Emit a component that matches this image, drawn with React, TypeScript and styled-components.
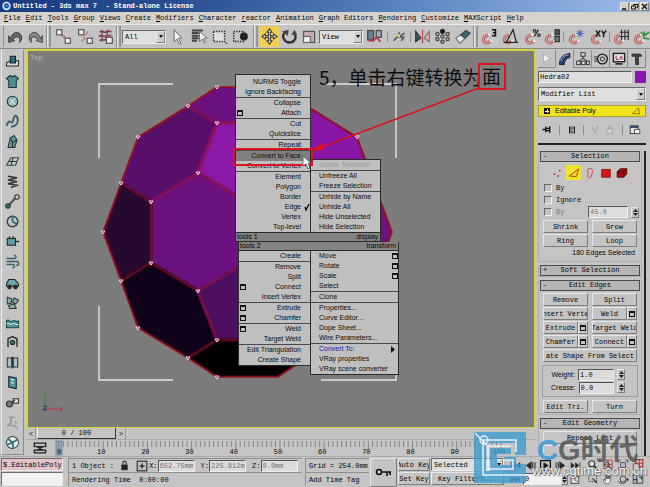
import React from "react";
import styled, { createGlobalStyle, css } from "styled-components";

const mono = `"Liberation Mono", "Noto Sans CJK SC", monospace`;
const sans = `"Liberation Sans", "Noto Sans CJK SC", sans-serif`;
const face = "#c4c4c4";

const raised = css`
  border: 1px solid;
  border-color: #e6e6e6 #7d7d7d #7d7d7d #e6e6e6;
`;
const sunken = css`
  border: 1px solid;
  border-color: #6a6a6a #ececec #ececec #6a6a6a;
`;

const GlobalStyle = createGlobalStyle`
  * { box-sizing: border-box; }
  body { margin: 0; background: ${face}; overflow: hidden; }
  button, input, select { font: inherit; color: inherit; margin: 0; padding: 0; border: 0; background: none; border-radius: 0; min-width: 0; }
  svg { display: block; }
`;

const Page = styled.div`
  position: relative;
  display: flex;
  flex-direction: column;
  height: 100vh;
  font: 7px/10px ${mono};
  color: #050505;
  background: ${face};
  white-space: nowrap;
`;

/* ---------- title, menus ---------- */
const TitleBar = styled.header`
  display: flex;
  align-items: center;
  gap: 2px;
  height: 12px;
  padding: 0 1px 0 2px;
  color: #fff;
  background: linear-gradient(90deg, #173a80 0%, #2c5295 30%, #5f88c4 65%, #9dbcea 100%);
`;
const Title = styled.h1`
  flex: 1;
  margin: 0;
  font: bold 7px/12px ${mono};
  white-space: pre;
`;
const WinButton = styled.button`
  && { ${raised} background: #d4d0c8; }
  width: 9px;
  height: 9px;
  margin-left: -1px;
`;
const MenuBar = styled.nav`
  display: flex;
  gap: 5px;
  height: 12px;
  padding: 0 4px;
  background: #d5d2cc;
`;
const MenuItem = styled.button`
  line-height: 12px;
  &::first-letter { text-decoration: underline; }
`;

/* ---------- main toolbar ---------- */
const ToolBar = styled.div`
  display: flex;
  align-items: center;
  height: 25px;
  padding: 0 2px;
  border-top: 1px solid #ececec;
  border-bottom: 1px solid #8a8a8a;
`;
const ToolButton = styled.button<{ $on?: boolean; $wide?: boolean }>`
  display: grid;
  place-items: center;
  flex: none;
  width: ${(p) => (p.$wide ? 23 : 20)}px;
  height: 21px;
  background: ${(p) => (p.$on ? "#f0cf50" : "none")};
`;
const Grip = styled.i`
  flex: none;
  width: 5px;
  height: 21px;
  margin: 0 1px;
  border: solid #8e8e8e;
  border-width: 0 1px;
  background: linear-gradient(90deg, #e8e8e8 1px, #c4c4c4 1px 2px, #9a9a9a 2px 3px, #e2e2e2 3px);
`;
const Divider = styled.i<{ $h?: number }>`
  flex: none;
  width: 1px;
  height: ${(p) => p.$h || 10}px;
  margin: 0 1px;
  background: #8c8c8c;
`;
const SelectBox = styled.span<{ $w?: number; $h: number }>`
  ${sunken}
  display: flex;
  align-items: stretch;
  width: ${(p) => (p.$w ? p.$w + "px" : "100%")};
  height: ${(p) => p.$h}px;
  flex: none;
  background: #dedede;
`;
const NativeSelect = styled.select`
  appearance: none;
  flex: 1;
  width: 0;
  padding-left: 2px;
`;
const DropArrow = styled.i`
  ${raised}
  display: grid;
  place-items: center;
  width: 9px;
  background: #cfcfcf;
  &::after {
    content: "";
    border: solid transparent;
    border-width: 3px 2px 0;
    border-top-color: #111;
  }
`;

/* ---------- body ---------- */
const Body = styled.main`
  display: flex;
  flex: 1;
  min-height: 0;
`;
const SideTools = styled.aside`
  display: flex;
  flex-direction: column;
  justify-content: space-between;
  width: 23px;
  margin: 1px 2px 1px 1px;
  padding: 1px 0;
  border-right: 1px solid #8d8d8d;
  border-bottom: 1px solid #8d8d8d;
  border-left: 1px solid #ececec;
`;
const SideButton = styled.button`
  display: grid;
  place-items: center;
  height: 20px;
`;
const Center = styled.section`
  display: flex;
  flex-direction: column;
  flex: 1;
  min-width: 0;
`;
const Viewport = styled.div`
  position: relative;
  flex: 1;
  min-height: 0;
  border: 2px solid #d8d23c;
  background: #7c7c7c;
`;
const SliderRow = styled.div`
  display: flex;
  height: 11px;
  padding-left: 1px;
  line-height: 10px;
`;
const SliderArrow = styled.button`
  width: 9px;
  border-right: 1px solid #999;
`;
const SliderHandle = styled.button`
  width: 79px;
  margin: 0 1px;
  border: solid #333;
  border-width: 0 1px 1px 0;
  border-left: 1px solid #eee;
`;
const TrackBar = styled.div`
  display: flex;
  height: 17px;
  padding: 1px 0 0 7px;
  border-top: 1px solid #a9a9a9;
`;
const CurveButton = styled.button`
  width: 16px;
  height: 14px;
  margin-right: 8px;
`;
const Ruler = styled.div`
  flex: 1;
  margin-right: 14px;
`;
const Ticks = styled.svg`
  width: calc(100% * 20 / 21);
  height: 8px;
  margin-left: 2px;
  overflow: visible;
`;
const TickLabels = styled.div`
  display: grid;
  grid-template-columns: 1fr repeat(10, 2fr);
  text-align: center;
  line-height: 7px;
  & > :first-child { text-align: left; }
`;

/* ---------- quad menu ---------- */
const QuadMenu = styled.div`
  position: absolute;
  left: 207px;
  top: 23px;
  font: 7px/10px ${sans};
`;
const QuadRow = styled.div<{ $bottom?: boolean }>`
  display: flex;
  align-items: ${(p) => (p.$bottom ? "flex-end" : "flex-start")};
  padding-left: ${(p) => (p.$bottom ? 0 : 3)}px;
`;
const Pane = styled.div<{ $w: number; $upper?: boolean; $lower?: boolean }>`
  width: ${(p) => p.$w}px;
  padding-top: ${(p) => (p.$upper ? 2 : 0)}px;
  border: 1px solid #2a2a2a;
  border-top-width: ${(p) => (p.$lower ? 0 : 1)}px;
  background: #bfbfbf;
  & + & { margin-left: -1px; }
`;
const QuadItem = styled.button<{ $right?: boolean; $on?: boolean; $off?: boolean; $blue?: boolean; $line?: boolean }>`
  display: flex;
  align-items: center;
  justify-content: space-between;
  flex-direction: ${(p) => (p.$right ? "row" : "row-reverse")};
  width: 100%;
  height: ${(p) => (p.$line ? 11 : 10)}px;
  padding: ${(p) => (p.$right ? "0 0 0 8px" : "0 9px 0 1px")};
  border-bottom: ${(p) => (p.$line ? "1px solid #4a4a4a" : "0")};
  background: ${(p) => (p.$on ? "#808080" : "none")};
  color: ${(p) => (p.$off ? "#999" : p.$blue ? "#2020b0" : "#0c0c0c")};
`;
const OptionBox = styled.i`
  width: 6px;
  height: 6px;
  border: 1px solid #111;
  border-top-width: 2px;
`;
const QuadHeader = styled.div<{ $indent?: boolean; $w: number }>`
  display: flex;
  justify-content: space-between;
  width: ${(p) => p.$w}px;
  height: 9px;
  margin-left: ${(p) => (p.$indent ? 3 : 0)}px;
  padding: 0 2px 0 1px;
  border: solid #2a2a2a;
  border-width: 0 1px 1px;
  line-height: 8px;
  background: #848484;
`;

/* ---------- tutorial annotation ---------- */
const Note = styled.p`
  position: absolute;
  left: 291px;
  top: 12px;
  margin: 0;
  display: flex;
  align-items: center;
  font: 19px/26px "Noto Sans CJK SC", sans-serif;
  color: #0c0c10;
`;
const NoteMark = styled.b`
  width: 28px;
  height: 27px;
  margin-left: -4px;
  border: 2px solid #d8141c;
  font-weight: inherit;
  text-align: center;
  line-height: 22px;
`;
const Overlay = styled.svg`
  position: absolute;
  left: 0;
  top: 0;
  pointer-events: none;
`;

/* ---------- command panel ---------- */
const Panel = styled.aside`
  display: flex;
  flex-direction: column;
  width: 115px;
  padding: 1px 4px 0 3px;
  overflow: hidden;
`;
const Tabs = styled.div`
  display: grid;
  grid-template-columns: repeat(6, 1fr);
  height: 18px;
  flex: none;
`;
const Tab = styled.button<{ $on?: boolean }>`
  display: grid;
  place-items: center;
  border: solid #8b8b8b;
  border-width: 0 1px ${(p) => (p.$on ? 0 : 1)}px 0;
`;
const NameRow = styled.div`
  display: flex;
  align-items: center;
  gap: 3px;
  height: 12px;
  margin: 3px 0 4px;
  flex: none;
`;
const Field = styled.input<{ $w?: number }>`
  && { border: 1px solid; border-color: #555 #eee #eee #555; background: #dcdcdc; padding-left: 1px; }
  width: ${(p) => (p.$w ? p.$w + "px" : "100%")};
  height: 12px;
`;
const Swatch = styled.button`
  flex: none;
  width: 11px;
  height: 12px;
  && { background: #8a17b4; }
`;
const Stack = styled.div`
  display: flex;
  align-items: center;
  gap: 5px;
  height: 12px;
  flex: none;
  margin: 4px 0 5px;
  padding: 0 4px 0 5px;
  background: #f0e21c;
  font: 7px/12px ${sans};
  border: 1px solid #aaa238;
  & > span { flex: 1; }
`;
const Plus = styled.i`
  width: 6px;
  height: 6px;
  background: linear-gradient(#fff, #fff) center / 4px 1px no-repeat, linear-gradient(#fff, #fff) center / 1px 4px no-repeat, #111;
`;
const StackTools = styled.div`
  display: flex;
  align-items: center;
  justify-content: space-between;
  height: 15px;
  flex: none;
  padding: 0 5px 0 4px;
  margin-bottom: 6px;
`;
const Rule = styled.hr`
  flex: none;
  width: 100%;
  height: 2px;
  margin: 0 0 6px;
  border: 0;
  background: #222;
`;
const Rollouts = styled.div`
  display: flex;
  flex-direction: column;
  gap: 3px;
  flex: 1;
  min-height: 0;
  overflow: hidden;
  border-right: 2px solid #222;
  padding-right: 2px;
`;
const Rollout = styled.section`
  flex: none;
  border: 1px solid #adadad;
  border-top: 0;
  padding: 0 2px;
`;
const RollHead = styled.button`
  display: grid;
  grid-template-columns: 8px 1fr 8px;
  width: calc(100% + 2px);
  height: 11px;
  margin: 0 -1px;
  line-height: 9px;
  && { border: 1px solid #4c4c4c; background: #b5b5b5; }
`;
const SubLevels = styled.div`
  display: flex;
  justify-content: space-evenly;
  padding: 3px 8px 0;
  height: 20px;
`;
const SubLevel = styled.button<{ $on?: boolean }>`
  display: grid;
  place-items: center;
  width: 15px;
  height: 15px;
  background: ${(p) => (p.$on ? "#f3e22c" : "none")};
`;
const Check = styled.label<{ $off?: boolean }>`
  display: flex;
  align-items: center;
  gap: 4px;
  height: 12px;
  padding-left: 3px;
  color: ${(p) => (p.$off ? "#777" : "inherit")};
  & > input {
    appearance: none;
    width: 8px;
    height: 8px;
    border: 1px solid;
    border-color: #666 #eee #eee #666;
  }
`;
const CheckRow = styled.div`
  display: flex;
  align-items: center;
  justify-content: space-between;
  color: #777;
`;
const SpinBox = styled.span`
  display: flex;
  align-items: center;
  gap: 3px;
`;
const Spinner = styled.button`
  && { ${raised} }
  display: grid;
  place-items: center;
  width: 8px;
  height: 11px;
`;
const Grid2 = styled.div`
  display: grid;
  grid-template-columns: 1fr 1fr;
  gap: 1px 4px;
  padding: 2px 2px 1px;
`;
const Pair = styled.div`
  display: flex;
  min-width: 0;
`;
const PushButton = styled.button<{ $full?: boolean }>`
  && { ${raised} }
  display: flex;
  justify-content: center;
  flex: 1;
  grid-column: ${(p) => (p.$full ? "1 / -1" : "auto")};
  height: 13px;
  line-height: 12px;
  overflow: hidden;
`;
const BoxButton = styled.button`
  && { ${raised} }
  display: grid;
  place-items: center;
  width: 10px;
`;
const Info = styled.output`
  display: block;
  padding: 0 4px 3px;
  text-align: right;
  font: 7px/10px ${sans};
`;
const Weights = styled.div`
  margin: 2px 1px 1px;
  padding: 2px 12px 2px 8px;
  border: 1px solid #9b9b9b;
`;
const WeightRow = styled.label`
  display: flex;
  align-items: center;
  justify-content: flex-end;
  gap: 3px;
  height: 13px;
  font: 7px/12px ${sans};
  & input { font-family: ${mono}; }
`;

/* ---------- status ---------- */
const Status = styled.footer`
  display: flex;
  height: 31px;
  padding: 1px 1px 0;
  border-top: 1px solid #aaa;
`;
const Script = styled.div`
  display: grid;
  grid-template-rows: 13px 14px;
  gap: 1px;
  width: 62px;
  margin-right: 5px;
`;
const ScriptLine = styled.input<{ $pink?: boolean }>`
  && { ${sunken} background: ${(p) => (p.$pink ? "#e3c3c6" : "#f2f2f2")}; padding-left: 1px; }
  width: 100%;
`;
const Prompt = styled.div`
  display: grid;
  grid-template-columns: 234px 64px;
  grid-template-rows: 14px 14px;
  column-gap: 3px;
`;
const Cell = styled.div`
  display: flex;
  align-items: center;
  padding-left: 3px;
  overflow: hidden;
  border: solid #8f8f8f;
  border-width: 1px 0 0 1px;
  white-space: pre;
`;
const ObjectText = styled.span`
  width: 47px;
`;
const ModeIcons = styled.span`
  display: flex;
  align-items: center;
  gap: 6px;
`;
const Coord = styled.label`
  display: flex;
  align-items: center;
  width: 52px;
  color: #111;
  & input { color: #6c6c6c; }
  & > span { width: 10px; text-align: right; }
`;
const KeyButton = styled.button`
  && { ${raised} }
  display: grid;
  place-items: center;
  width: 27px;
  height: 29px;
  margin: 0 1px;
`;
const KeyGrid = styled.div`
  display: grid;
  grid-template-columns: 32px 73px;
  grid-template-rows: 14px 14px;
  column-gap: 1px;
`;
const PlayGrid = styled.div`
  display: grid;
  grid-template-columns: repeat(5, 15px);
  grid-template-rows: 14px 14px;
  margin-left: 4px;
  align-items: center;
  justify-items: center;
`;
const FrameSpin = styled.div`
  grid-column: 2 / 5;
  display: flex;
  align-items: center;
  width: 100%;
  && input { background: #f0f0f0; }
`;
const NavGrid = styled.div`
  display: grid;
  grid-template-columns: repeat(4, 15px);
  grid-template-rows: 14px 14px;
  margin-left: 2px;
  place-items: center;
`;
const Plain = styled.button`
  display: grid;
  place-items: center;
`;

/* ---------- watermark ---------- */
const Watermark = styled.div`
  position: absolute;
  right: 4px;
  bottom: 4px;
  display: flex;
  align-items: center;
  gap: 6px;
  pointer-events: none;
`;
const MarkText = styled.div`
  display: flex;
  flex-direction: column;
  width: 114px;
`;
const MarkName = styled.strong`
  padding-left: 5px;
  font: bold 29px/26px "Liberation Sans", "Noto Sans CJK SC", sans-serif;
  color: rgba(85, 85, 85, 0.85);
  & > i { font-style: normal; color: #4b9fd6; }
`;
const MarkUrl = styled.span`
  font: 13px/15px ${sans};
  color: #f4f4f4;
  text-shadow: 0 0 1px #555, 1px 1px 1px #777;
`;

/* ---------- icons ---------- */
const Svg = ({ s = 18, children }: { s?: number; children: React.ReactNode }) => (
  <svg width={s} height={s} viewBox="0 0 20 20" fill="none" stroke="#333" strokeWidth="1.4" aria-hidden="true">
    {children}
  </svg>
);
const Magnet = (
  <g>
    <path d="M9 8 5.500 9.500A4.200 4.200 0 0 0 8 17.500L12 15" stroke="#a85450" strokeWidth="3.400" />
    <path d="M9 8 5.500 9.500A4.200 4.200 0 0 0 8 17.500L12 15" stroke="#e2a096" strokeWidth="1.400" />
    <path d="M8.500 8.200 10.500 7.400M11 15.700 12.800 14.500" stroke="#f3f3f3" strokeWidth="3" />
  </g>
);
const Squares = (
  <g fill="#f4f4f4" stroke="#555">
    <rect x="2" y="2" width="6" height="6" />
    <rect x="12" y="12" width="6" height="6" />
  </g>
);

const icons: Record<string, React.ReactNode> = {
  Undo: <path d="M4 13C6 4 14 3 17 9c1 3 0 5-2 8 1-6-2-9-8-4l2 2-7 2 0-8z" fill="#666" stroke="#333" strokeWidth="1" />,
  Redo: <path d="M16 13C14 4 6 3 3 9c-1 3 0 5 2 8-1-6 2-9 8-4l-2 2 7 2 0-8z" fill="#888" stroke="#333" strokeWidth="1" />,
  Link: <>{Squares}<path d="M8 8l5 5" stroke="#a55" strokeWidth="2.500" strokeDasharray="2 1" /></>,
  Unlink: <>{Squares}<path d="M8 13l-3 3M13 4l-3 4M8 10l2 3" stroke="#c66" /></>,
  Bind: <><path d="M3 5c4-4 5 3 9-1h5M2 10c4-4 6 3 9-1h6M3 15c3-3 5 1 8-2" stroke="#943a55" strokeWidth="2" /><path d="M6 2v14M12 2v6" stroke="#555" /><rect x="11" y="11" width="7" height="7" fill="#eee" stroke="#555" /></>,
  Arrow: <path d="M6 2v14l3-3 3 6 2-1-3-6h4z" fill="#f5f5f5" stroke="#555" strokeWidth="1" />,
  ByName: <><path d="M1 3h13M1 6h8M1 9h8M1 12h8M1 15h6" strokeWidth="2.400" stroke="#444" /><path d="M10 4v12l3-3 3 5 1-1-2-5h4z" fill="#eee" stroke="#666" strokeWidth="1" /></>,
  Region: <><rect x="3" y="4" width="13" height="12" fill="#e0e0e0" strokeDasharray="1.500 1.500" strokeWidth="1.800" stroke="#222" /><path d="M17 18h2" /></>,
  Window: <><rect x="2" y="4" width="12" height="12" strokeDasharray="1.500 1.500" strokeWidth="1.800" stroke="#222" /><circle cx="14" cy="10" r="4" fill="#111" /><circle cx="14" cy="10" r="1" fill="#eee" /></>,
  Move: <path d="M10 1l3 4h-2v4h4V7l4 3-4 3v-2h-4v4h2l-3 4-3-4h2v-4H5v2l-4-3 4-3v2h4V5H7z" fill="#e8e4d4" stroke="#333" strokeWidth="1.200" />,
  Rotate: <><path d="M4 6C0 11 5 17 10 17s9-5 6-10" stroke="#333" strokeWidth="2.800" /><path d="M1 4l8-2-1 7zM12 8l4-6 3 6z" fill="#444" stroke="none" /></>,
  Scale: <><rect x="3" y="4" width="13" height="13" fill="#c9a9ab" stroke="#555" /><rect x="3" y="10" width="8" height="7" fill="#f2f2f2" stroke="#666" /></>,
  Pivot: <><rect x="2" y="3" width="7" height="11" fill="#6d7b91" stroke="#444" /><rect x="12" y="3" width="6" height="8" fill="#aab" stroke="#444" /><path d="M3 15h6l3-4 5 5" stroke="#b34" strokeWidth="2" /></>,
  Manip: <><path d="M3 15l5-5 2-5M8 10l7 1-3 4M10 10l6-4" stroke="#555" strokeWidth="2" /><circle cx="9" cy="9" r="2" fill="#d8d060" stroke="none" /></>,
  Mirror: <><path d="M2 4v12l6-4z" fill="#3f5960" /><path d="M10 2v16" stroke="#b44" /><path d="M18 4v12l-6-4z" fill="#e8b0a8" stroke="#777" /></>,
  ArrayTool: <g fill="#aaa" strokeWidth="1.200"><circle cx="10" cy="4" r="2.500" fill="#111" /><circle cx="4" cy="7" r="2" /><circle cx="16" cy="7" r="2" /><circle cx="4" cy="13" r="2" /><circle cx="16" cy="13" r="2" /><circle cx="10" cy="16" r="2" /><circle cx="10" cy="10" r="2" /></g>,
  Align: <><path d="M2 12l6-4 5 4-6 6z" fill="#e8e8e8" stroke="#777" /><path d="M8 8l6-5 5 3-6 6z" fill="#3d6a75" stroke="#345" /></>,
  Snap: <>{Magnet}<path d="M13 2h4v7h-4M14 5.500h3" strokeWidth="1.800" stroke="#111" /></>,
  Angle: <>{Magnet}<path d="M2 17h17M5 17L13 2l4 15" stroke="#222" /></>,
  Percent: <>{Magnet}<path d="M17 2l-5 8" stroke="#111" /><circle cx="12.500" cy="3.500" r="1.500" /><circle cx="17.500" cy="8.500" r="1.500" /></>,
  SpinSnap: <>{Magnet}<rect x="13" y="2" width="5" height="6" fill="#555" /><rect x="13" y="10" width="5" height="6" fill="#777" /></>,
  Frozen: <>{Magnet}<path d="M14 2v9M9.500 6.500h9M11 3.500l6 6M17 3.500l-6 6" stroke="#5566c0" strokeWidth="1.200" /></>,
  AxisXY: <>{Magnet}<path d="M7 3l5 7M12 3l-5 7M14 3l2 4 3-4M16 7v4" stroke="#222" strokeWidth="1.800" /></>,
  GridSnap: <>{Magnet}<path d="M8 5h11M8 10h11M10 2v12M14 2v12M18 2v12" stroke="#333" /></>,
  PivotSnap: <>{Magnet}<path d="M13 13V4M13 9l-4-4M13 9l6-4M13 12l6 1" stroke="#3a8a3a" strokeWidth="1.800" /></>,
  Create: <path d="M5 2v13l4-3 3 6 2-1-3-6h5z" fill="#f0f0f0" stroke="#999" strokeWidth="1" />,
  Modify: <><path d="M2 18C2 9 7 3 17 2v6c-5 1-8 4-8 10z" fill="#26416e" stroke="#223" /><path d="M4 13c1-5 4-8 11-9" stroke="#9db6d8" /></>,
  Hierarchy: <g fill="#ddd"><rect x="7" y="1" width="6" height="5" /><path d="M10 6v4M10 9L4 13M10 9l6 4" /><rect x="1" y="13" width="5" height="5" /><rect x="8" y="13" width="5" height="5" /><rect x="15" y="13" width="4" height="5" /></g>,
  Motion: <><circle cx="12" cy="10" r="7" stroke="#222" strokeWidth="2" /><circle cx="12" cy="10" r="3" /><path d="M0 7h5M0 10h5M0 13h5" /></>,
  Display: <><rect x="2" y="2" width="16" height="12" fill="#eadfe4" stroke="#222" strokeWidth="2" /><path d="M6 5v6h4M11 11l2-5 2 5" stroke="#93345a" /><path d="M5 17h10" strokeWidth="2.500" /></>,
  Utilities: <path d="M3 3h12l2 3h-5v12H8V6H3z" fill="#444" />,
  EdgeLoop: <path d="M3 15L15 4l2 12z" stroke="#7c5a10" strokeWidth="1.600" />,
  Pin: <><path d="M1 10h6M7 5v10M7 8h7M7 12h7M14 4v12" stroke="#111" strokeWidth="2.500" /></>,
  ShowEnd: <path d="M5 3v14M8 3v14M12 3v6M15 3v14M12 12v5" stroke="#222" strokeWidth="2" />,
  Unique: <path d="M3 3l5 6v8M17 3l-5 6v8" stroke="#aaa" strokeWidth="2.500" />,
  Trash: <><rect x="4" y="8" width="11" height="9" stroke="#999" fill="#d4d4d4" /><path d="M7 8V3h5v5" stroke="#999" /></>,
  Config: <><rect x="2" y="3" width="13" height="13" fill="#e8e8e8" stroke="#222" /><path d="M2 5h13" strokeWidth="3" stroke="#26416e" /><path d="M9 9h9v7H9z" fill="#fff" stroke="#333" /></>,
  SubVertex: <g fill="#c22" stroke="none"><circle cx="4" cy="12" r="1.500" /><circle cx="10" cy="15" r="1.500" /><circle cx="13" cy="6" r="1.500" /></g>,
  SubEdge: <path d="M2 15L18 3l-4 13z" stroke="#a04a10" strokeWidth="1.600" />,
  SubBorder: <path d="M6 4c6-4 10 0 8 5s-1 8-5 9-4-5-2-7-4-5-1-7z" stroke="#b8404c" fill="#d8b8b8" />,
  SubPoly: <rect x="3" y="4" width="14" height="13" fill="#d91515" stroke="#7c1010" />,
  SubElem: <><path d="M2 8l5-5h11v8l-5 6H2z" fill="#a80f14" stroke="#400" /><path d="M2 8h11l5-5M13 8v9" stroke="#400" /></>,
  Lock: <><rect x="5" y="9" width="10" height="9" fill="#222" /><path d="M7 9V5c0-4 6-4 6 0v4" strokeWidth="2" /></>,
  Abs: <><rect x="2" y="2" width="16" height="16" strokeWidth="2" /><path d="M10 5v10M5 10h10" /><circle cx="10" cy="10" r="2" fill="#333" /></>,
  Curve: <path d="M2 3h16v5H2zM2 13h16v4H2zM6 8l8 5M14 8l-8 5" strokeWidth="2" stroke="#222" />,
  First: <path d="M2 4v12M10 5l-6 5 6 5zM18 5l-6 5 6 5z" fill="#222" />,
  Prev: <path d="M11 4l-8 6 8 6zM14 4v12M18 4v12" fill="#222" strokeWidth="2" />,
  Play: <><rect x="1" y="1" width="18" height="18" strokeWidth="2.500" stroke="#111" /><path d="M7 5l8 5-8 5z" fill="#111" /></>,
  Next: <path d="M2 4v12M6 4v12M9 4l8 6-8 6z" fill="#222" strokeWidth="2" />,
  Last: <path d="M18 4v12M10 5l6 5-6 5zM2 5l6 5-6 5z" fill="#222" />,
  KeyMode: <path d="M2 6l6 4-6 4zM10 6l6 4-6 4zM17 5v10" fill="#222" />,
  TimeConfig: <><rect x="2" y="4" width="14" height="13" fill="#ddd" /><path d="M9 6v5l5 3M12 2l6 5" stroke="#a33" /></>,
  Zoom: <><circle cx="8" cy="8" r="5" fill="#ddd" strokeWidth="1.800" /><path d="M12 12l6 6" strokeWidth="2.800" /></>,
  ZoomAll: <><path d="M3 2h14v14H3zM10 2v14M3 9h14" stroke="#a33" /><circle cx="8" cy="9" r="4" /><path d="M11 12l6 6" strokeWidth="2" /></>,
  Extents: <><path d="M2 6V2h4M14 2h4v4M18 14v4h-4M6 18H2v-4" stroke="#333" /><rect x="6" y="6" width="8" height="8" fill="#bbb" stroke="#446" /></>,
  ExtentsAll: <><rect x="6" y="1" width="12" height="12" stroke="#a33" strokeWidth="2" /><rect x="2" y="8" width="10" height="10" fill="#ccc" stroke="#833" /><path d="M12 1v12M6 7h12" stroke="#a33" /></>,
  FieldRegion: <><path d="M3 3h13v11H3z" strokeDasharray="2 1" /><path d="M9 9l8 8" strokeWidth="2" /></>,
  Pan: <path d="M6 18l-4-7 2-1 2 3V4h2v6V2h2v8V3h2v7l1-5h2l-1 9-3 4z" fill="#eee" strokeWidth="1" />,
  Arc: <><circle cx="10" cy="10" r="5" /><path d="M2 14c5 6 14 4 16-5l-3 2M18 9l1 4" /></>,
  MinMax: <><rect x="2" y="3" width="16" height="14" /><path d="M8 3v14M8 11H2M12 7h4v4" stroke="#345" strokeWidth="2" /></>,
};

const teal = "#2f6f78";
const sideIcons: [string, React.ReactNode][] = [
  ["Rigid body collection", <><path d="M2 12l5-3h11v7H2z" fill="#ddd" stroke="#222" /><path d="M7 3h7v9H7z" fill={teal} stroke="#123" /></>],
  ["Cloth collection", <path d="M2 6l5-4 3 2 3-2 5 4-3 3v9H5V9z" fill="#4b9099" stroke="#233" />],
  ["Soft body collection", <><circle cx="10" cy="10" r="7" fill="#86b5ba" stroke="#233" /><path d="M6 6l8 8M14 6l-8 8" stroke="#eee" /></>],
  ["Rope collection", <path d="M2 16C6 2 9 18 11 8s6-5 6 1-6 8-9 8" stroke="#3c5f66" strokeWidth="2.500" />],
  ["Deforming mesh", <><path d="M4 18L7 5l5-3 4 6-3 10z" fill="#5b9ba3" stroke="#233" /><path d="M7 5l3 6 6-3M10 11v7" /></>],
  ["Plane", <><path d="M2 15L8 5h10l-4 10z" fill="#bcd2d4" stroke="#344" /><path d="M5 10h11M11 5l-3 10" /></>],
  ["Spring", <path d="M4 3l12 2-12 3 12 2-12 3 12 2-8 3" stroke="#333" strokeWidth="1.800" />],
  ["Linear dashpot", <><path d="M3 17L16 3" strokeWidth="3" stroke="#555" /><circle cx="4" cy="16" r="3" fill={teal} /><circle cx="16" cy="4" r="3" fill="#ccc" /></>],
  ["Angular dashpot", <><circle cx="10" cy="10" r="7" strokeWidth="2" stroke="#344" /><path d="M10 10V2M10 10l6 4" stroke={teal} strokeWidth="2.500" /></>],
  ["Motor", <><rect x="3" y="6" width="11" height="9" fill="#5b9ba3" stroke="#222" /><path d="M14 10h5M6 3v3M11 3v3" strokeWidth="2" /></>],
  ["Wind", <path d="M2 6h10c4 0 3-5 0-4M2 10h14c4 1 2 6-1 5M2 14h8c4 0 3 5 0 4" stroke="#35606a" strokeWidth="1.800" />],
  ["Toy car", <><path d="M2 12l3-6h8l5 6v3H2z" fill="#6aa5ac" stroke="#222" /><circle cx="6" cy="16" r="2.500" fill="#222" /><circle cx="14" cy="16" r="2.500" fill="#222" /></>],
  ["Fracture", <path d="M3 3l6 2-1 6-5 1zM12 4l6 3-4 5-4-2zM5 14l7-2 3 6-9 0z" fill="#7fb0b5" stroke="#333" />],
  ["Water", <><path d="M2 8c3-4 5 3 8 0s5 3 8 0v9H2z" fill="#4e939c" stroke="#244" /><path d="M2 12c3-3 5 3 8 0s5 3 8 0" stroke="#ddd" /></>],
  ["Constraint solver", <><path d="M4 16V5l6-3 6 3v11" strokeWidth="2" /><circle cx="10" cy="10" r="3" fill={teal} /></>],
  ["Hinge", <><path d="M3 4h6v12H3zM11 4h6v12h-6z" fill="#a5c4c7" stroke="#333" /><path d="M10 2v16" strokeWidth="2" /></>],
  ["Cloth modifier", <><path d="M5 2l10 2v14L5 16z" fill="#4f969f" stroke="#122" /><path d="M8 6l4 1M8 10l4 1" stroke="#dff" /></>],
  ["Soft body modifier", <><circle cx="6" cy="12" r="4" fill="#777" /><rect x="11" y="5" width="7" height="6" fill="#ddd" /><path d="M9 10l4-3" strokeWidth="2" /></>],
  ["Analyze world", <path d="M5 3h8M8 3v7l-4 4h9l3 4M13 9l3 2" stroke="#919c9c" strokeWidth="2.200" />],
  ["Preview animation", <><circle cx="10" cy="10" r="8" fill="#e9f2f2" stroke="#344" /><path d="M10 10L4 5M10 10l7-4M10 10l1 7M10 10l-7 3" strokeWidth="2.500" stroke={teal} /></>],
];

const ToolIcon = ({ name, on, wide }: { name: string; on?: boolean; wide?: boolean }) => (
  <ToolButton aria-label={name} $on={on} $wide={wide}>
    <Svg s={17}>{icons[name]}</Svg>
  </ToolButton>
);

const Choice = ({ label, value, w, h }: { label: string; value: string; w?: number; h: number }) => (
  <SelectBox $w={w} $h={h}>
    <NativeSelect aria-label={label} defaultValue={value}>
      <option>{value}</option>
    </NativeSelect>
    <DropArrow />
  </SelectBox>
);

const Spin = ({ label }: { label: string }) => (
  <Spinner aria-label={label}>
    <svg width="5" height="7" viewBox="0 0 5 7"><path d="M0 3l2.500-3L5 3zM0 4l2.500 3L5 4z" fill="#222" /></svg>
  </Spinner>
);

/* ---------- scene ---------- */
const hull = "216,87 187,106 137,137 120,183 102,232 120,281 137,328 187,358 216,377 277,377 306,358 356,328 373,281 391,232 373,183 356,137 306,106 277,87";
const faces: [string, string, string][] = [
  ["216,87 187,106 216,123 277,123 306,106 277,87", "#6b1181", "#7d1068"],
  ["187,106 137,137 120,183 150,202 197,173 216,123", "#570f69", "#750f60"],
  ["216,123 197,173 246,202 296,173 277,123", "#8c18a8", "#930f70"],
  ["306,106 356,137 373,183 343,202 296,173 277,123", "#8916a6", "#930f70"],
  ["150,202 197,173 246,202 246,262 197,291 150,263", "#6b1180", "#7d1068"],
  ["343,202 296,173 246,202 246,262 296,291 343,263", "#7a1392", "#7d1068"],
  ["120,183 102,232 120,281 150,263 150,202", "#27082f", "#4d0a2c"],
  ["373,183 391,232 373,281 343,263 343,202", "#6b1180", "#7d1068"],
  ["120,281 150,263 197,291 216,340 187,358 137,328", "#10021a", "#3a0712"],
  ["373,281 343,263 296,291 277,340 306,358 356,328", "#3a0a48", "#600d40"],
  ["197,291 246,262 296,291 277,340 216,340", "#4c0f60", "#6d0e55"],
  ["187,358 216,340 277,340 306,358 277,377 216,377", "#020002", "#3a0712"],
];
const marks = [[216, 87], [187, 106], [137, 137], [120, 183], [102, 232], [120, 281], [137, 328], [187, 358], [216, 377], [216, 123], [197, 173], [150, 202], [150, 263], [197, 291], [216, 340], [356, 137]];

const Scene = () => (
  <svg width="506" height="376" viewBox="27 51 506 376" fill="none" role="img" aria-label="Top viewport">
    {faces.map(([points, fill, edge]) => (
      <polygon key={points} points={points} fill={fill} stroke={edge} strokeOpacity="0.750" strokeWidth="4" />
    ))}
    {faces.map(([points]) => (
      <polygon key={points} points={points} stroke="#8f1838" strokeOpacity="0.450" strokeWidth="1" />
    ))}
    <path fillRule="evenodd" d={`M27 51H533V427H27ZM${hull.replace(/ /g, "L")}Z`} fill="#7c7c7c" />
    <polygon points={hull} stroke="#93141f" strokeWidth="1.600" />
    <g fill="#8a1a60" stroke="#eedcee" strokeWidth="1">
      {marks.map(([x, y]) => <path key={`${x}-${y}`} d={`M${x - 2} ${y - 1}h4l-2 3z`} />)}
    </g>
    <path d="M172 84H98V158M320 84H395V158M98 306V380H172M320 380H395V306" stroke="#e4e4e4" strokeWidth="1.400" />
    <text x="29" y="60" fontFamily="Liberation Mono" fontSize="7" fill="#b4b4b4">Top</text>
    <path d="M44 408V394" stroke="#3d8a48" />
    <path d="M44 409H58" stroke="#b03048" />
    <path d="M42 391l2 2 2-2M44 393v2" stroke="#3d9a48" />
    <path d="M58 407l4 4M62 407l-4 4" stroke="#b03048" />
    <path d="M42 406h4l-4 4h4" stroke="#28306e" />
  </svg>
);

/* ---------- quad menu data ---------- */
type Item = { t: string; line?: boolean; on?: boolean; off?: boolean; blue?: boolean; box?: boolean; sub?: boolean };
const tools1: Item[] = [
  { t: "NURMS Toggle" }, { t: "Ignore Backfacing", line: true }, { t: "Collapse" }, { t: "Attach", box: true, line: true },
  { t: "Cut" }, { t: "Quickslice", line: true }, { t: "Repeat", line: true }, { t: "Convert to Face", on: true },
  { t: "Convert to Vertex", line: true }, { t: "Element" }, { t: "Polygon" }, { t: "Border" }, { t: "Edge" }, { t: "Vertex" }, { t: "Top-level" },
];
const display: Item[] = [
  { t: "Isolate Selection", off: true, line: true }, { t: "Unfreeze All" }, { t: "Freeze Selection", line: true },
  { t: "Unhide by Name" }, { t: "Unhide All" }, { t: "Hide Unselected" }, { t: "Hide Selection" },
];
const tools2: Item[] = [
  { t: "Create", line: true }, { t: "Remove" }, { t: "Split" }, { t: "Connect", box: true }, { t: "Insert Vertex", line: true },
  { t: "Extrude", box: true }, { t: "Chamfer", box: true, line: true }, { t: "Weld", box: true }, { t: "Target Weld", line: true },
  { t: "Edit Triangulation" }, { t: "Create Shape" },
];
const transform: Item[] = [
  { t: "Move", box: true }, { t: "Rotate", box: true }, { t: "Scale", box: true }, { t: "Select", line: true }, { t: "Clone", line: true },
  { t: "Properties..." }, { t: "Curve Editor..." }, { t: "Dope Sheet..." }, { t: "Wire Parameters...", line: true },
  { t: "Convert To:", blue: true, sub: true }, { t: "VRay properties" }, { t: "VRay scene converter" },
];
const Items = ({ list, right }: { list: Item[]; right?: boolean }) => (
  <>
    {list.map((i) => (
      <QuadItem key={i.t} $right={right} $line={i.line} $on={i.on} $off={i.off} $blue={i.blue}>
        <span>{i.t}</span>
        {i.box && <OptionBox />}
        {i.sub && <svg width="8" height="7" viewBox="0 0 8 7"><path d="M1 0l4 3.500L1 7z" fill="#111" /></svg>}
      </QuadItem>
    ))}
  </>
);

const menus = ["File", "Edit", "Tools", "Group", "Views", "Create", "Modifiers", "Character", "reactor", "Animation", "Graph Editors", "Rendering", "Customize", "MAXScript", "Help"];

const Head = ({ sign, text }: { sign: string; text: string }) => (
  <RollHead><span>{sign}</span><span>{text}</span></RollHead>
);

export default function App() {
  return (
    <Page>
      <GlobalStyle />
      <TitleBar>
        <svg width="9" height="10" viewBox="0 0 20 20" fill="none"><circle cx="10" cy="10" r="8" fill="#7fb2d8" stroke="#e4f2fa" strokeWidth="2.500" /><path d="M14 7c-4-4-9 0-7 4s7 2 7-1h-4" stroke="#153a78" strokeWidth="2.500" /></svg>
        <Title>{"Untitled - 3ds max 7  - Stand-alone License"}</Title>
        <WinButton aria-label="Minimize"><svg width="7" height="7"><path d="M1 6h4" stroke="#111" strokeWidth="1.500" /></svg></WinButton>
        <WinButton aria-label="Restore"><svg width="7" height="7" fill="none" stroke="#111"><path d="M2.500 2.500v-1h4v3h-1M.5 3h4v3h-4z" /></svg></WinButton>
        <WinButton aria-label="Close"><svg width="7" height="7"><path d="M1 1l5 5M6 1L1 6" stroke="#111" strokeWidth="1.300" /></svg></WinButton>
      </TitleBar>
      <MenuBar>{menus.map((m) => <MenuItem key={m}>{m}</MenuItem>)}</MenuBar>

      <ToolBar>
        <Divider $h={21} />
        <ToolIcon name="Undo" /><ToolIcon name="Redo" />
        <Grip />
        <ToolIcon name="Link" wide /><ToolIcon name="Unlink" /><ToolIcon name="Bind" />
        <Grip />
        <Choice label="Selection filter" value="All" w={44} h={14} />
        <ToolIcon name="Arrow" wide /><ToolIcon name="ByName" /><ToolIcon name="Region" /><ToolIcon name="Window" wide />
        <Grip />
        <ToolIcon name="Move" on /><ToolIcon name="Rotate" /><ToolIcon name="Scale" />
        <Choice label="Reference coordinate system" value="View" w={44} h={14} />
        <ToolIcon name="Pivot" wide /><Divider />
        <ToolIcon name="Manip" /><Divider />
        <ToolIcon name="Mirror" /><ToolIcon name="ArrayTool" /><ToolIcon name="Align" />
        <Grip />
        <ToolIcon name="Snap" /><ToolIcon name="Angle" wide /><ToolIcon name="Percent" /><ToolIcon name="SpinSnap" />
        <Divider />
        <ToolIcon name="Frozen" wide /><ToolIcon name="AxisXY" />
        <Divider />
        <ToolIcon name="GridSnap" /><ToolIcon name="PivotSnap" />
      </ToolBar>

      <Body>
        <SideTools>
          {sideIcons.map(([name, icon]) => <SideButton key={name} aria-label={name}><Svg s={15}>{icon}</Svg></SideButton>)}
        </SideTools>

        <Center>
          <Viewport>
            <Scene />
            <QuadMenu>
              <QuadRow $bottom>
                <Pane $w={76} $upper><Items list={tools1} /></Pane>
                <Pane $w={71}><Items list={display} right /></Pane>
              </QuadRow>
              <QuadHeader $w={146}><span>tools 1</span><span>display</span></QuadHeader>
              <QuadHeader $w={161} $indent><span>tools 2</span><span>transform</span></QuadHeader>
              <QuadRow>
                <Pane $w={73} $lower><Items list={tools2} /></Pane>
                <Pane $w={89} $lower><Items list={transform} right /></Pane>
              </QuadRow>
            </QuadMenu>
            <Note><span>5，单击右键转换为</span><NoteMark>面</NoteMark></Note>
            <Overlay width="506" height="376" viewBox="27 51 506 376" fill="none">
              <rect x="233" y="149" width="78" height="16" stroke="#d8141c" strokeWidth="2" />
              <path d="M478 88L318 148" stroke="#d8141c" strokeWidth="1.600" />
              <path d="M311 151l9-8 3 7z" fill="#d8141c" />
              <path d="M302 156v10l3-2 2 5 2-1-2-5h3z" fill="#fff" stroke="#444" strokeWidth="0.800" />
              <path d="M304 207l1 3 3-6" stroke="#111" strokeWidth="1.400" />
            </Overlay>
          </Viewport>
          <SliderRow>
            <SliderArrow>&lt;</SliderArrow>
            <SliderHandle>0 / 100</SliderHandle>
            <SliderArrow>&gt;</SliderArrow>
          </SliderRow>
          <TrackBar>
            <CurveButton aria-label="Mini curve editor"><Svg s={14}>{icons.Curve}</Svg></CurveButton>
            <Ruler>
              <Ticks stroke="#858585">
                <rect x="-3" y="0" width="6" height="14" fill="#8fa4b8" stroke="#71879c" />
                {Array.from({ length: 101 }, (_, i) => <line key={i} x1={`${i}%`} x2={`${i}%`} y1="0" y2={i % 10 ? 6 : 8} />)}
              </Ticks>
              <TickLabels>{Array.from({ length: 11 }, (_, i) => <span key={i}>{i * 10}</span>)}</TickLabels>
            </Ruler>
          </TrackBar>
        </Center>

        <Panel>
          <Tabs>
            {["Create", "Modify", "Hierarchy", "Motion", "Display", "Utilities"].map((n) => (
              <Tab key={n} aria-label={n} $on={n === "Modify"}><Svg s={14}>{icons[n]}</Svg></Tab>
            ))}
          </Tabs>
          <NameRow><Field aria-label="Object name" defaultValue="Hedra02" /><Swatch aria-label="Object color" /></NameRow>
          <Choice label="Modifier List" value="Modifier List" h={14} />
          <Stack><Plus /><span>Editable Poly</span><Svg s={10}>{icons.EdgeLoop}</Svg></Stack>
          <StackTools>
            <Plain aria-label="Pin stack"><Svg s={11}>{icons.Pin}</Svg></Plain><Divider />
            <Plain aria-label="Show end result"><Svg s={10}>{icons.ShowEnd}</Svg></Plain><Divider />
            <Plain aria-label="Make unique"><Svg s={10}>{icons.Unique}</Svg></Plain>
            <Plain aria-label="Remove modifier"><Svg s={10}>{icons.Trash}</Svg></Plain><Divider />
            <Plain aria-label="Configure sets"><Svg s={12}>{icons.Config}</Svg></Plain>
          </StackTools>
          <Rule />
          <Rollouts>
            <Rollout>
              <Head sign="-" text="Selection" />
              <SubLevels>
                {["SubVertex", "SubEdge", "SubBorder", "SubPoly", "SubElem"].map((n) => (
                  <SubLevel key={n} aria-label={n} $on={n === "SubEdge"}><Svg s={12}>{icons[n]}</Svg></SubLevel>
                ))}
              </SubLevels>
              <Check><input type="checkbox" />By</Check>
              <Check><input type="checkbox" />Ignore</Check>
              <CheckRow>
                <Check $off><input type="checkbox" disabled />By</Check>
                <SpinBox><Field $w={40} aria-label="Angle" defaultValue="45.0" /><Spin label="Angle step" /></SpinBox>
              </CheckRow>
              <Grid2>
                <PushButton>Shrink</PushButton><PushButton>Grow</PushButton>
                <PushButton>Ring</PushButton><PushButton>Loop</PushButton>
              </Grid2>
              <Info>180 Edges Selected</Info>
            </Rollout>
            <Rollout><Head sign="+" text="Soft Selection" /></Rollout>
            <Rollout>
              <Head sign="-" text="Edit Edges" />
              <Grid2>
                <PushButton>Remove</PushButton><PushButton>Split</PushButton>
                <PushButton>Insert Vertex</PushButton>
                <Pair><PushButton>Weld</PushButton><BoxButton aria-label="Weld settings"><OptionBox /></BoxButton></Pair>
                <Pair><PushButton>Extrude</PushButton><BoxButton aria-label="Extrude settings"><OptionBox /></BoxButton></Pair>
                <PushButton>Target Weld</PushButton>
                <Pair><PushButton>Chamfer</PushButton><BoxButton aria-label="Chamfer settings"><OptionBox /></BoxButton></Pair>
                <Pair><PushButton>Connect</PushButton><BoxButton aria-label="Connect settings"><OptionBox /></BoxButton></Pair>
                <PushButton $full>ate Shape From Select</PushButton>
              </Grid2>
              <Weights>
                <WeightRow>Weight:<Field $w={36} defaultValue="1.0" /><Spin label="Weight step" /></WeightRow>
                <WeightRow>Crease:<Field $w={36} defaultValue="0.0" /><Spin label="Crease step" /></WeightRow>
              </Weights>
              <Grid2><PushButton>Edit Tri.</PushButton><PushButton>Turn</PushButton></Grid2>
            </Rollout>
            <Rollout>
              <Head sign="-" text="Edit Geometry" />
              <Grid2><PushButton $full>Repeat Last</PushButton><PushButton $full /></Grid2>
            </Rollout>
          </Rollouts>
        </Panel>
      </Body>

      <Status>
        <Script>
          <ScriptLine $pink aria-label="Macro recorder" defaultValue="$.EditablePoly" />
          <ScriptLine aria-label="MAXScript listener" />
        </Script>
        <Prompt>
          <Cell>
            <ObjectText>1 Object :</ObjectText>
            <ModeIcons>
              <Plain aria-label="Lock selection"><Svg s={11}>{icons.Lock}</Svg></Plain>
              <Plain aria-label="Absolute mode"><Svg s={12}>{icons.Abs}</Svg></Plain>
            </ModeIcons>
            <Coord><span>X:</span><Field $w={37} defaultValue="652.75mm" /></Coord>
            <Coord><span>Y:</span><Field $w={37} defaultValue="225.812mm" /></Coord>
            <Coord><span>Z:</span><Field $w={37} defaultValue="0.0mm" /></Coord>
          </Cell>
          <Cell>Grid = 254.0mm</Cell>
          <Cell>{"Rendering Time  0:00:00"}</Cell>
          <Cell>Add Time Tag</Cell>
        </Prompt>
        <KeyButton aria-label="Set keys">
          <svg width="17" height="9" viewBox="0 0 17 9" fill="none" stroke="#111" strokeWidth="1.600"><circle cx="4" cy="4" r="2.500" /><path d="M7 4h9M12 4v4M15 4v3" /></svg>
        </KeyButton>
        <KeyGrid>
          <PushButton>Auto Key</PushButton>
          <Choice label="Key set" value="Selected" h={13} />
          <PushButton>Set Key</PushButton>
          <PushButton>Key Filters...</PushButton>
        </KeyGrid>
        <PlayGrid>
          {["First", "Prev", "Play", "Next", "Last"].map((n) => <Plain key={n} aria-label={n}><Svg s={11}>{icons[n]}</Svg></Plain>)}
          <Plain aria-label="Key mode"><Svg s={11}>{icons.KeyMode}</Svg></Plain>
          <FrameSpin><Field aria-label="Frame" defaultValue="0" /><Spin label="Frame step" /></FrameSpin>
          <Plain aria-label="Time configuration"><Svg s={11}>{icons.TimeConfig}</Svg></Plain>
        </PlayGrid>
        <NavGrid>
          {["Zoom", "ZoomAll", "Extents", "ExtentsAll", "FieldRegion", "Pan", "Arc", "MinMax"].map((n) => (
            <Plain key={n} aria-label={n}><Svg s={12}>{icons[n]}</Svg></Plain>
          ))}
        </NavGrid>
      </Status>

      <Watermark>
        <svg width="52" height="51" viewBox="0 0 52 51" fill="none">
          <path d="M0 0H52V23H41V11H12V39H41V32H52V51H0Z" fill="#3f9bd0" fillOpacity="0.800" />
          <path d="M16 16H37V22H23V33H37V29H30V25H42V39H16Z" fill="#3f9bd0" fillOpacity="0.800" />
          <path d="M1 1L14 14V37H39V28H29M9 8H42V20M14 14H37M9 8V43H52" stroke="#e8f2f8" strokeWidth="1.500" />
          <circle cx="10" cy="8" r="4" stroke="#e8f2f8" strokeWidth="1.500" />
        </svg>
        <MarkText>
          <MarkName><i>C</i>G时代</MarkName>
          <MarkUrl>www.cgtime.com.cn</MarkUrl>
        </MarkText>
      </Watermark>
    </Page>
  );
}
